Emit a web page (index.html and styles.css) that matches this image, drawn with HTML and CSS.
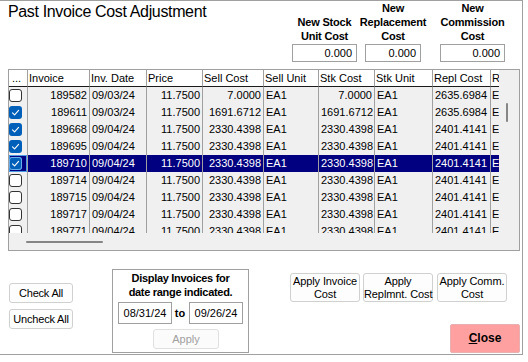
FILE: index.html
```html
<!DOCTYPE html>
<html>
<head>
<meta charset="utf-8">
<link rel="stylesheet" href="styles.css">
</head>
<body>
<div class="window">
  <div class="top">
    <h1 class="title">Past Invoice Cost Adjustment</h1>
    <div class="costs">
      <div class="cost c1"><div class="cost-label">New Stock<br>Unit Cost</div><div class="cost-box">0.000</div></div>
      <div class="cost c2"><div class="cost-label">New<br>Replacement<br>Cost</div><div class="cost-box">0.000</div></div>
      <div class="cost c3"><div class="cost-label">New<br>Commission<br>Cost</div><div class="cost-box">0.000</div></div>
    </div>
  </div>

  <div class="grid">
    <div class="grid-main">
      <div class="row head">
        <div class="cell chk dots">...</div>
        <div class="cell">Invoice</div>
        <div class="cell">Inv. Date</div>
        <div class="cell">Price</div>
        <div class="cell">Sell Cost</div>
        <div class="cell">Sell Unit</div>
        <div class="cell">Stk Cost</div>
        <div class="cell">Stk Unit</div>
        <div class="cell">Repl Cost</div>
        <div class="cell last">Repl Unit</div>
      </div>
      <div class="row">
        <div class="cell chk"><span class="box"></span></div>
        <div class="cell num">189582</div><div class="cell">09/03/24</div><div class="cell num">11.7500</div><div class="cell num">7.0000</div><div class="cell">EA1</div><div class="cell num">7.0000</div><div class="cell">EA1</div><div class="cell">2635.6984</div><div class="cell last">EA1</div>
      </div>
      <div class="row">
        <div class="cell chk"><span class="box on"><svg viewBox="0 0 13 13" width="13" height="13"><path d="M3.5 6.8 L5.6 8.8 L9.6 4.4" fill="none" stroke="#fff" stroke-width="1.1" stroke-linecap="round" stroke-linejoin="round"/></svg></span></div>
        <div class="cell num">189611</div><div class="cell">09/03/24</div><div class="cell num">11.7500</div><div class="cell num">1691.6712</div><div class="cell">EA1</div><div class="cell num">1691.6712</div><div class="cell">EA1</div><div class="cell">2635.6984</div><div class="cell last">EA1</div>
      </div>
      <div class="row">
        <div class="cell chk"><span class="box on"><svg viewBox="0 0 13 13" width="13" height="13"><path d="M3.5 6.8 L5.6 8.8 L9.6 4.4" fill="none" stroke="#fff" stroke-width="1.1" stroke-linecap="round" stroke-linejoin="round"/></svg></span></div>
        <div class="cell num">189668</div><div class="cell">09/04/24</div><div class="cell num">11.7500</div><div class="cell num">2330.4398</div><div class="cell">EA1</div><div class="cell num">2330.4398</div><div class="cell">EA1</div><div class="cell">2401.4141</div><div class="cell last">EA1</div>
      </div>
      <div class="row">
        <div class="cell chk"><span class="box on"><svg viewBox="0 0 13 13" width="13" height="13"><path d="M3.5 6.8 L5.6 8.8 L9.6 4.4" fill="none" stroke="#fff" stroke-width="1.1" stroke-linecap="round" stroke-linejoin="round"/></svg></span></div>
        <div class="cell num">189695</div><div class="cell">09/04/24</div><div class="cell num">11.7500</div><div class="cell num">2330.4398</div><div class="cell">EA1</div><div class="cell num">2330.4398</div><div class="cell">EA1</div><div class="cell">2401.4141</div><div class="cell last">EA1</div>
      </div>
      <div class="row sel">
        <div class="cell chk"><span class="box on"><svg viewBox="0 0 13 13" width="13" height="13"><path d="M3.5 6.8 L5.6 8.8 L9.6 4.4" fill="none" stroke="#fff" stroke-width="1.1" stroke-linecap="round" stroke-linejoin="round"/></svg></span></div>
        <div class="cell num">189710</div><div class="cell">09/04/24</div><div class="cell num">11.7500</div><div class="cell num">2330.4398</div><div class="cell">EA1</div><div class="cell num">2330.4398</div><div class="cell">EA1</div><div class="cell">2401.4141</div><div class="cell last">EA1</div>
      </div>
      <div class="row">
        <div class="cell chk"><span class="box"></span></div>
        <div class="cell num">189714</div><div class="cell">09/04/24</div><div class="cell num">11.7500</div><div class="cell num">2330.4398</div><div class="cell">EA1</div><div class="cell num">2330.4398</div><div class="cell">EA1</div><div class="cell">2401.4141</div><div class="cell last">EA1</div>
      </div>
      <div class="row">
        <div class="cell chk"><span class="box"></span></div>
        <div class="cell num">189715</div><div class="cell">09/04/24</div><div class="cell num">11.7500</div><div class="cell num">2330.4398</div><div class="cell">EA1</div><div class="cell num">2330.4398</div><div class="cell">EA1</div><div class="cell">2401.4141</div><div class="cell last">EA1</div>
      </div>
      <div class="row">
        <div class="cell chk"><span class="box"></span></div>
        <div class="cell num">189717</div><div class="cell">09/04/24</div><div class="cell num">11.7500</div><div class="cell num">2330.4398</div><div class="cell">EA1</div><div class="cell num">2330.4398</div><div class="cell">EA1</div><div class="cell">2401.4141</div><div class="cell last">EA1</div>
      </div>
      <div class="row">
        <div class="cell chk"><span class="box"></span></div>
        <div class="cell num">189771</div><div class="cell">09/04/24</div><div class="cell num">11.7500</div><div class="cell num">2330.4398</div><div class="cell">EA1</div><div class="cell num">2330.4398</div><div class="cell">EA1</div><div class="cell">2401.4141</div><div class="cell last">EA1</div>
      </div>
    </div>
    <div class="vscroll"><span class="vthumb"></span></div>
    <div class="hscroll"><span class="hthumb"></span></div>
    <div class="corner"></div>
  </div>

  <div class="bottom">
    <div class="checks">
      <div class="btn small">Check All</div>
      <div class="btn small">Uncheck All</div>
    </div>
    <div class="range">
      <div class="range-text">Display Invoices for<br>date range indicated.</div>
      <div class="dates">
        <div class="date">08/31/24</div>
        <span class="to">to</span>
        <div class="date">09/26/24</div>
      </div>
      <div class="btn apply disabled">Apply</div>
    </div>
    <div class="right">
      <div class="applies">
        <div class="btn wide">Apply Invoice<br>Cost</div>
        <div class="btn wide">Apply<br>Replmnt. Cost</div>
        <div class="btn wide">Apply Comm.<br>Cost</div>
      </div>
      <div class="btn close"><u>C</u>lose</div>
    </div>
  </div>
</div>
</body>
</html>
```

FILE: styles.css
```css
* { box-sizing: border-box; }
html, body { margin: 0; padding: 0; background: #fff; }
body {
  font-family: "Liberation Sans", Arial, sans-serif;
  font-size: 11px;
  color: #000;
}
.window {
  width: 523px;
  height: 355px;
  border-top: 1px solid #a0a0a0;
  border-right: 1px solid #a0a0a0;
  border-bottom: 1px solid #a0a0a0;
}

/* top */
.top {
  display: flex;
  height: 68px;
  padding-left: 8px;
}
.title {
  margin: 2px 0 0 0;
  font-size: 16px;
  font-weight: normal;
  line-height: 18px;
  letter-spacing: -0.35px;
  white-space: nowrap;
}
.costs {
  display: flex;
  margin-left: auto;
  margin-right: 17px;
  padding-bottom: 7px;
}
.cost {
  display: flex;
  flex-direction: column;
  justify-content: flex-end;
  align-items: center;
}
.c1 { width: 65px; }
.c2 { width: 56px; margin-left: 8px; }
.c3 { width: 65px; margin-left: 19px; }
.cost-label {
  font-weight: bold;
  font-size: 11px;
  line-height: 14px;
  letter-spacing: -0.2px;
  text-align: center;
  white-space: nowrap;
  margin-bottom: 1px;
}
.cost-box {
  width: 100%;
  height: 18px;
  border: 1px solid #a0a0a0;
  text-align: right;
  padding-right: 4px;
  line-height: 16px;
  font-size: 11px;
}

/* grid */
.grid {
  display: grid;
  grid-template-columns: 490px 20px;
  grid-template-rows: 163px 17px;
  width: 512px;
  height: 182px;
  margin-left: 8px;
  border: 1px solid #a0a0a0;
  background: #f0f0f0;
}
.grid-main {
  overflow: hidden;
}
.row {
  display: grid;
  grid-template-columns: 19px 62px 57px 56px 61px 55px 56px 58px 58px 8px;
  height: 17px;
}
.cell {
  border-right: 1px solid #a0a0a0;
  overflow: hidden;
  white-space: nowrap;
  line-height: 17px;
  padding: 0 2px;
  background: #f0f0f0;
}
.num { text-align: right; }
.cell.last { border-right: none; padding: 0 1px; }
.head .cell {
  background: #fff;
  line-height: 16px;
  border-bottom: 1px solid #1a1a1a;
  padding: 0 1px;
}
.head .dots { padding-left: 3px; }
.chk {
  padding: 0;
  display: flex;
  align-items: center;
}
.box {
  display: block;
  width: 13px;
  height: 13px;
  border: 1px solid #333;
  border-radius: 3px;
  background: #fff;
  margin-left: 0;
}
.box.on {
  border: none;
  background: #005fb8;
}
.box svg { display: block; }
.sel .cell {
  background: #000080;
  color: #fff;
}
.sel .chk {
  box-shadow: inset 0 0 0 1px #4d9be6;
}
.sel .box.on { box-shadow: 0 0 0 1px #6aaeea inset; }

.vscroll {
  position: relative;
  background: #f0f0f0;
}
.vthumb {
  position: absolute;
  left: 7px;
  top: 33px;
  width: 2px;
  height: 19px;
  background: #858585;
  border-radius: 1px;
}
.hscroll {
  position: relative;
  background: #f0f0f0;
}
.hthumb {
  position: absolute;
  left: 17px;
  top: 8px;
  width: 77px;
  height: 2px;
  background: #858585;
  border-radius: 1px;
}
.corner { background: #f0f0f0; }

/* bottom */
.bottom {
  display: flex;
  height: 103px;
  padding-left: 9px;
}
.btn {
  background: #fdfdfd;
  border: 1px solid #d0d0d0;
  border-radius: 3px;
  text-align: center;
  font-size: 11px;
  white-space: nowrap;
}
.checks {
  display: flex;
  flex-direction: column;
  gap: 6px;
  margin-top: 32px;
  width: 64px;
}
.btn.small {
  height: 20px;
  line-height: 18px;
  letter-spacing: -0.2px;
}
.range {
  margin-left: 39px;
  margin-top: 18px;
  width: 137px;
  height: 84px;
  border: 1px solid #a0a0a0;
  padding: 0 5px;
}
.range-text {
  font-weight: bold;
  line-height: 14px;
  text-align: center;
  letter-spacing: -0.3px;
  margin-top: 1px;
}
.dates {
  display: flex;
  align-items: center;
  margin-top: 3px;
}
.date {
  width: 54px;
  height: 22px;
  border: 1px solid #a0a0a0;
  line-height: 20px;
  text-align: center;
}
.to {
  flex: 1;
  text-align: center;
  font-weight: bold;
  padding-right: 1px;
}
.btn.apply {
  width: 66px;
  height: 20px;
  line-height: 18px;
  margin: 5px 0 0 35px;
}
.btn.disabled {
  color: #a0a0a0;
  border-color: #e0e0e0;
  background: #fbfbfb;
}
.right {
  margin-left: 41px;
  width: 230px;
  display: flex;
  flex-direction: column;
}
.applies {
  display: flex;
  gap: 3px;
  margin-top: 22px;
}
.btn.wide {
  width: 70px;
  height: 29px;
  line-height: 13px;
  padding-top: 1px;
  letter-spacing: -0.1px;
}
.applies .btn.wide:nth-child(3) { margin-left: 1px; }
.btn.close {
  align-self: flex-end;
  margin-top: auto;
  margin-bottom: 1px;
  width: 70px;
  height: 29px;
  line-height: 27px;
  background: #ffa0a0;
  border-color: #e8b0b0;
  border-radius: 2px;
  font-weight: bold;
  font-size: 12px;
}
.btn.close u { text-decoration-thickness: 1px; text-underline-offset: 1px; }
```
